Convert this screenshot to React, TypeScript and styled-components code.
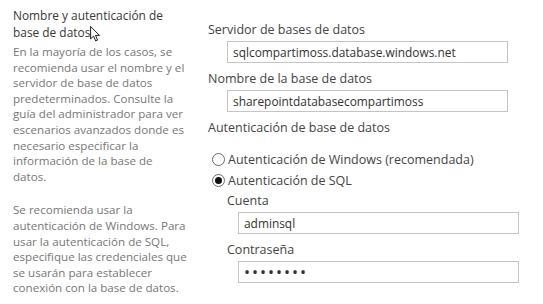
import React from "react";
import styled, { createGlobalStyle } from "styled-components";

const GlobalStyle = createGlobalStyle`
  html, body {
    margin: 0;
    padding: 0;
    background: #ffffff;
  }
  body {
    font-family: "Open Sans", "Noto Sans", sans-serif;
  }
`;

const Page = styled.div`
  position: relative;
  width: 543px;
  height: 304px;
  display: grid;
  grid-template-columns: 195px 1fr;
  padding-left: 13px;
  box-sizing: border-box;
  overflow: hidden;
`;

const Help = styled.div`
  padding-top: 7px;
`;

const Title = styled.h2`
  margin: 0 0 3px;
  font-size: 11.9px;
  line-height: 17px;
  font-weight: 400;
  color: #383838;
  white-space: nowrap;
`;

const HelpText = styled.p`
  margin: 0 0 18px;
  font-size: 11.6px;
  line-height: 15.6px;
  color: #777777;
  white-space: nowrap;
`;

const Form = styled.div`
  padding-top: 20px;
`;

const Label = styled.div<{ $indent?: number }>`
  padding-left: ${(p) => p.$indent || 0}px;
  font-size: 12.5px;
  line-height: 20px;
  color: #444444;
`;

const Input = styled.input<{ $indent?: number; $secret?: boolean }>`
  display: block;
  box-sizing: border-box;
  width: 281px;
  height: 22px;
  margin: 1px 0 6px ${(p) => p.$indent || 0}px;
  padding: 0 5px;
  border: 1px solid #c4c4c4;
  background: #ffffff;
  font-family: inherit;
  font-size: ${(p) => (p.$secret ? "16px" : "11.9px")};
  letter-spacing: ${(p) => (p.$secret ? "2px" : "0")};
  color: #333333;
  outline: none;
`;

const Options = styled.div`
  margin-top: 11px;
  padding-left: 4px;
`;

const RadioRow = styled.label`
  display: flex;
  align-items: center;
  gap: 3px;
  height: 21px;
  font-size: 12.5px;
  color: #444444;
`;

const RadioDot = styled.span<{ $checked?: boolean }>`
  position: relative;
  width: 13px;
  height: 13px;
  box-sizing: border-box;
  border: 1px solid #6a6a6a;
  border-radius: 50%;
  flex-shrink: 0;

  &::after {
    content: "";
    display: ${(p) => (p.$checked ? "block" : "none")};
    position: absolute;
    left: 2px;
    top: 2px;
    width: 7px;
    height: 7px;
    border-radius: 50%;
    background: #111111;
  }
`;

const SubFields = styled.div`
  padding-left: 15px;
`;

const Cursor = styled.svg`
  position: absolute;
  left: 90px;
  top: 26px;
`;

const Radio = ({ checked, children }: { checked?: boolean; children: React.ReactNode }) => (
  <RadioRow>
    <RadioDot $checked={checked} />
    {children}
  </RadioRow>
);

const Lines = ({ lines }: { lines: string[] }) => (
  <>
    {lines.map((line, i) => (
      <React.Fragment key={i}>
        {i > 0 && <br />}
        {line}
      </React.Fragment>
    ))}
  </>
);

const intro = [
  "En la mayoría de los casos, se",
  "recomienda usar el nombre y el",
  "servidor de base de datos",
  "predeterminados. Consulte la",
  "guía del administrador para ver",
  "escenarios avanzados donde es",
  "necesario especificar la",
  "información de la base de",
  "datos.",
];

const authNote = [
  "Se recomienda usar la",
  "autenticación de Windows. Para",
  "usar la autenticación de SQL,",
  "especifique las credenciales que",
  "se usarán para establecer",
  "conexión con la base de datos.",
];

export default function App() {
  return (
    <Page>
      <GlobalStyle />
      <Help>
        <Title>
          <Lines lines={["Nombre y autenticación de", "base de datos"]} />
        </Title>
        <HelpText>
          <Lines lines={intro} />
        </HelpText>
        <HelpText>
          <Lines lines={authNote} />
        </HelpText>
      </Help>
      <Form>
        <Label>Servidor de bases de datos</Label>
        <Input $indent={19} readOnly value="sqlcompartimoss.database.windows.net" />
        <Label>Nombre de la base de datos</Label>
        <Input $indent={19} readOnly value="sharepointdatabasecompartimoss" />
        <Label>Autenticación de base de datos</Label>
        <Options>
          <Radio>Autenticación de Windows (recomendada)</Radio>
          <Radio checked>Autenticación de SQL</Radio>
          <SubFields>
            <Label>Cuenta</Label>
            <Input $indent={11} readOnly value="adminsql" />
            <Label>Contraseña</Label>
            <Input $indent={11} $secret readOnly type="password" value="12345678" />
          </SubFields>
        </Options>
      </Form>
      <Cursor width="11" height="16" viewBox="0 0 12 18">
        <path
          d="M0.5 0.5 L0.5 14.5 L3.8 11.4 L6.2 16.8 L8.3 15.9 L6 10.6 L10.5 10.6 Z"
          fill="#ffffff"
          stroke="#000000"
          strokeWidth="1"
          strokeLinejoin="round"
        />
      </Cursor>
    </Page>
  );
}
